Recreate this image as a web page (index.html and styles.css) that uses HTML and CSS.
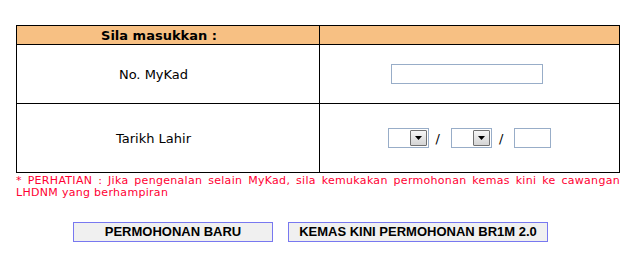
FILE: index.html
```html
<!DOCTYPE html>
<html lang="ms">
<head>
<meta charset="utf-8">
<title>Semakan BR1M</title>
<link rel="stylesheet" href="styles.css">
</head>
<body>
<div class="page">
  <div class="form-grid">
    <div class="cell head left">Sila masukkan :</div>
    <div class="cell head right"></div>
    <div class="cell label left">No. MyKad</div>
    <div class="cell field right"><input class="textbox mykad" type="text"></div>
    <div class="cell label left last">Tarikh Lahir</div>
    <div class="cell field right last">
      <span class="select"><span class="select-val"></span><span class="select-btn"><svg width="7" height="4" viewBox="0 0 7 4"><path d="M0 0H7L3.5 4Z" fill="#000"/></svg></span></span>
      <span class="slash">/</span>
      <span class="select"><span class="select-val"></span><span class="select-btn"><svg width="7" height="4" viewBox="0 0 7 4"><path d="M0 0H7L3.5 4Z" fill="#000"/></svg></span></span>
      <span class="slash">/</span>
      <input class="textbox year" type="text">
    </div>
  </div>
  <p class="notice">* PERHATIAN : Jika pengenalan selain MyKad, sila kemukakan permohonan kemas kini ke cawangan LHDNM yang berhampiran</p>
  <div class="actions">
    <button class="btn btn-new" type="button">PERMOHONAN BARU</button>
    <button class="btn btn-update" type="button">KEMAS KINI PERMOHONAN BR1M 2.0</button>
  </div>
</div>
</body>
</html>
```
FILE: styles.css
```css
html, body {
  margin: 0;
  padding: 0;
  background: #fff;
}
.page {
  padding: 25px 0 0 16px;
  width: 604px;
  font-family: "DejaVu Sans", Verdana, sans-serif;
}
.form-grid {
  display: grid;
  grid-template-columns: 303px 1fr;
  grid-template-rows: 19px 59px 68px;
  width: 604px;
  box-sizing: border-box;
  border: 1px solid #000;
}
.cell {
  display: flex;
  align-items: center;
  justify-content: center;
  border-bottom: 1px solid #000;
}
.cell.left {
  border-right: 1px solid #000;
}
.cell.last {
  border-bottom: 0;
}
.head {
  background: #f7c083;
  font-weight: bold;
  font-size: 13px;
  color: #000;
}
.head.left {
  padding-right: 18px;
}
.label {
  font-size: 13px;
  color: #000;
  padding-right: 29px;
  padding-top: 1px;
}
.field {
  font-size: 13px;
}
.textbox {
  box-sizing: border-box;
  height: 20px;
  border: 1px solid #98adc8;
  background: #fff;
  margin: 0;
  padding: 0 2px;
  font-family: "DejaVu Sans", sans-serif;
  font-size: 12px;
}
.mykad {
  width: 152px;
  margin-left: -5px;
}
.year {
  width: 37px;
}
.select {
  box-sizing: border-box;
  display: inline-flex;
  align-items: center;
  width: 41px;
  height: 20px;
  border: 1px solid #98adc8;
  padding: 1px;
  background: #fff;
}
.select-val {
  flex: 1;
}
.select-btn {
  box-sizing: border-box;
  width: 17px;
  height: 16px;
  border: 1px solid #707070;
  border-radius: 1px;
  background: linear-gradient(#f6f6f6, #d4d4d4);
  display: flex;
  align-items: center;
  justify-content: center;
}
.slash {
  margin: 0 11px 0 7px;
  color: #000;
  font-size: 13px;
}
.notice {
  margin: 2px 0 0 0;
  width: 604px;
  font-size: 11px;
  line-height: 12px;
  letter-spacing: 0.3px;
  color: #ff0033;
  text-align: justify;
}
.actions {
  display: flex;
  gap: 15px;
  margin-top: 23px;
  padding-left: 57px;
}
.btn {
  box-sizing: border-box;
  height: 20px;
  padding: 0;
  margin: 0;
  border: 1px solid #7878f0;
  background: #f0f0f0;
  color: #000;
  font-family: "Liberation Sans", Arial, sans-serif;
  font-weight: bold;
  font-size: 13px;
  line-height: 18px;
}
.btn-new {
  width: 200px;
}
.btn-update {
  width: 260px;
}
```
